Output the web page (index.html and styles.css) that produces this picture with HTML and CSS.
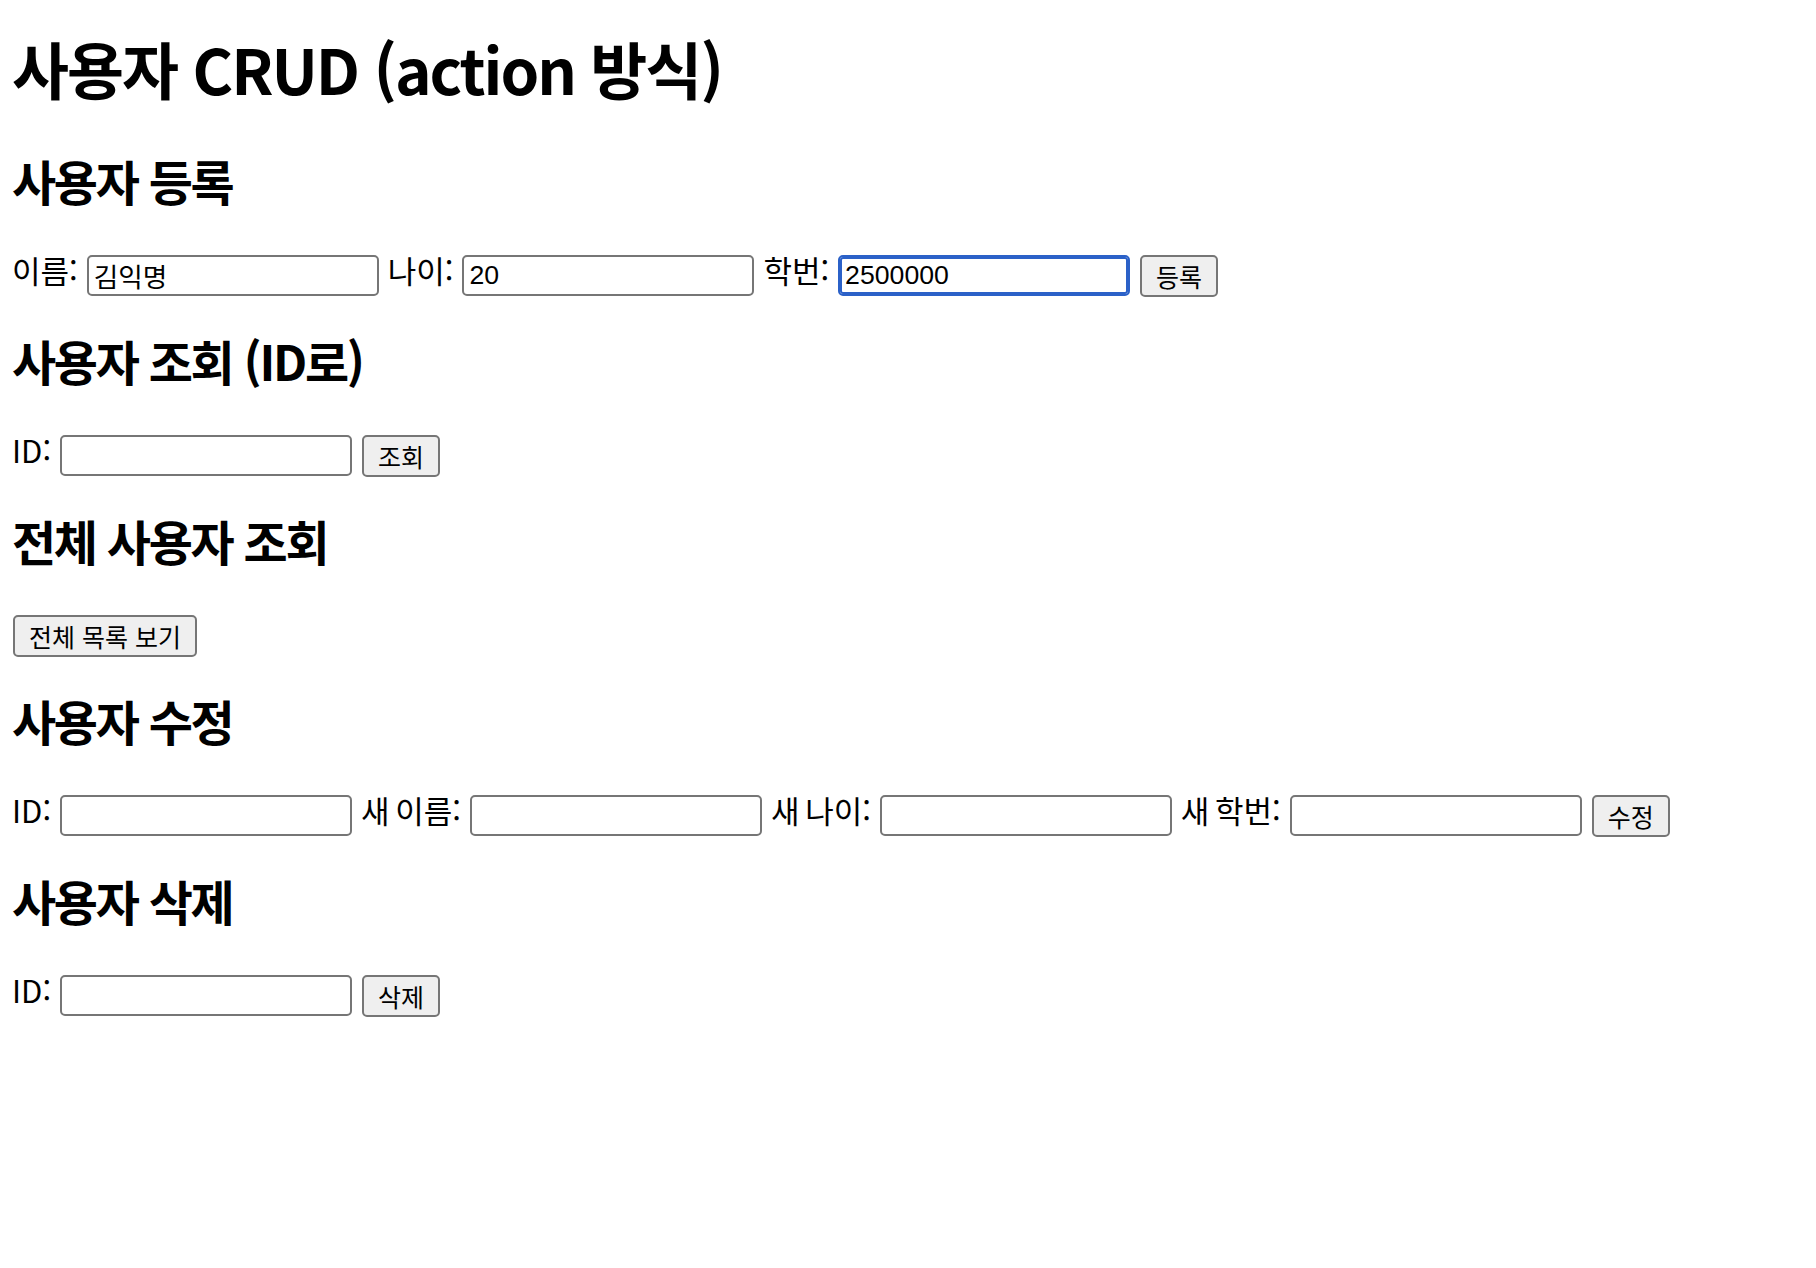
FILE: index.html
```html
<!DOCTYPE html>
<html lang="ko">
<head>
<meta charset="utf-8">
<title>사용자 CRUD (action 방식)</title>
<link rel="stylesheet" href="styles.css">
</head>
<body>
<main class="page">
  <h1 class="title">사용자 CRUD (action 방식)</h1>

  <section class="block">
    <h2 class="block-title">사용자 등록</h2>
    <form class="row">
      <label class="label" for="c-name">이름:</label>
      <input class="field" id="c-name" type="text" value="김익명">
      <label class="label" for="c-age">나이:</label>
      <input class="field" id="c-age" type="text" value="20">
      <label class="label" for="c-sid">학번:</label>
      <input class="field is-focused" id="c-sid" type="text" value="2500000">
      <button class="btn" type="button">등록</button>
    </form>
  </section>

  <section class="block">
    <h2 class="block-title">사용자 조회 (ID로)</h2>
    <form class="row">
      <label class="label" for="r-id">ID:</label>
      <input class="field" id="r-id" type="text">
      <button class="btn" type="button">조회</button>
    </form>
  </section>

  <section class="block">
    <h2 class="block-title">전체 사용자 조회</h2>
    <form class="row">
      <button class="btn" type="button">전체 목록 보기</button>
    </form>
  </section>

  <section class="block">
    <h2 class="block-title">사용자 수정</h2>
    <form class="row">
      <label class="label" for="u-id">ID:</label>
      <input class="field" id="u-id" type="text">
      <label class="label" for="u-name">새 이름:</label>
      <input class="field" id="u-name" type="text">
      <label class="label" for="u-age">새 나이:</label>
      <input class="field" id="u-age" type="text">
      <label class="label" for="u-sid">새 학번:</label>
      <input class="field" id="u-sid" type="text">
      <button class="btn" type="button">수정</button>
    </form>
  </section>

  <section class="block">
    <h2 class="block-title">사용자 삭제</h2>
    <form class="row">
      <label class="label" for="d-id">ID:</label>
      <input class="field" id="d-id" type="text">
      <button class="btn" type="button">삭제</button>
    </form>
  </section>
</main>
</body>
</html>
```

FILE: styles.css
```css
html, body {
  margin: 0;
  padding: 0;
  background: #ffffff;
}

body {
  font-family: "Noto Sans CJK KR", "Noto Sans", sans-serif;
  color: #000000;
}

.page {
  padding: 30px 0 0 12px;
}

.title {
  margin: 0 0 46px;
  font-size: 62px;
  line-height: 76px;
  font-weight: 700;
  letter-spacing: -2px;
}

.block {
  margin-bottom: 35px;
}

.block-title {
  margin: 0 0 47px;
  font-size: 48px;
  line-height: 56px;
  font-weight: 700;
  letter-spacing: -2.3px;
}

.row {
  display: flex;
  align-items: flex-start;
  gap: 9px;
  height: 42px;
  margin: 0;
}

.label {
  font-size: 31px;
  line-height: 30px;
  letter-spacing: 0;
  word-spacing: -3px;
}

.field {
  box-sizing: border-box;
  width: 292px;
  height: 41px;
  margin: 0;
  padding: 0 5px;
  border: 2px solid #767676;
  border-radius: 5px;
  background: #ffffff;
  font-family: "Liberation Sans", "Noto Sans CJK KR", sans-serif;
  font-size: 26.67px;
  color: #000000;
  outline: none;
}

.field.is-focused {
  border-color: #2b61c8;
  box-shadow: inset 0 0 0 2px #2b61c8;
}

.btn {
  box-sizing: border-box;
  height: 42px;
  margin: 0 0 0 1px;
  padding: 0 14px;
  border: 2px solid #767676;
  border-radius: 5px;
  background: #efefef;
  font-family: "Noto Sans CJK KR", sans-serif;
  font-size: 25px;
  line-height: 1;
  letter-spacing: 0;
  color: #000000;
}
```
